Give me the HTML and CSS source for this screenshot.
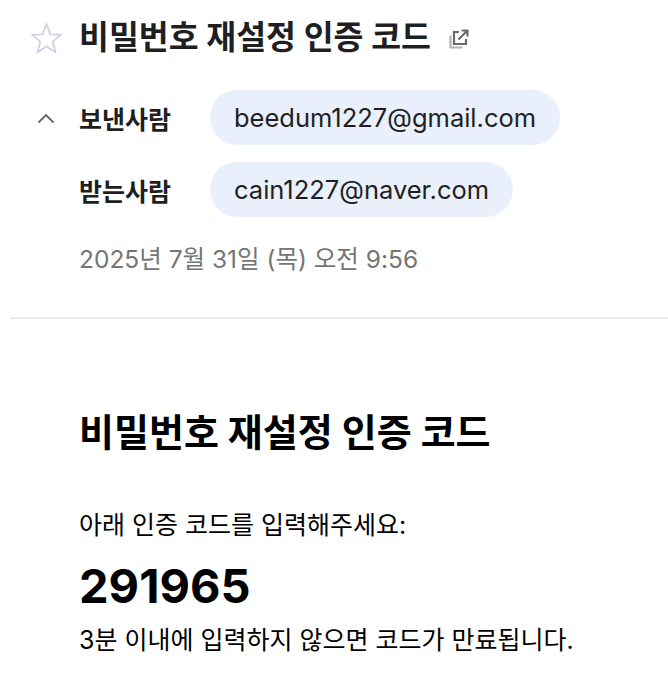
FILE: index.html
```html
<!DOCTYPE html>
<html lang="ko">
<head>
    <meta charset="UTF-8">
    <meta name="viewport" content="width=device-width, initial-scale=1.0">
    <title>비밀번호 재설정 인증 코드</title>
    <link rel="stylesheet" href="styles.css">
</head>
<body>
    <div class="mail">
        <div class="mail-head">
            <div class="subject-row">
                <svg class="star" width="33" height="33" viewBox="0 0 33 33">
                    <path d="M16.5 2 L20.4 12.4 L31 12.7 L22.6 19.6 L25.6 30.5 L16.5 24.2 L7.4 30.5 L10.4 19.6 L2 12.7 L12.6 12.4 Z" fill="none" stroke="#cfd2e4" stroke-width="1.8" stroke-linejoin="round"/>
                </svg>
                <h1 class="subject">비밀번호 재설정 인증 코드</h1>
                <svg class="popout" width="22" height="22" viewBox="0 0 22 22">
                    <path d="M2.5 7.5 V19.5 H14.5" fill="none" stroke="#b4b4b4" stroke-width="2.2"/>
                    <path d="M11 4 H6 V16 H18 V11" fill="none" stroke="#6b6b6b" stroke-width="2.2"/>
                    <path d="M10.5 11.5 L19 3 M13.5 2.5 H19.5 V8.5" fill="none" stroke="#6b6b6b" stroke-width="2.2"/>
                </svg>
            </div>
            <div class="people">
                <div class="person-row">
                    <span class="toggle">
                        <svg width="18" height="12" viewBox="0 0 18 12"><path d="M1.5 10.5 L9 3 L16.5 10.5" fill="none" stroke="#666" stroke-width="1.8"/></svg>
                    </span>
                    <span class="label">보낸사람</span>
                    <span class="pill">beedum1227@gmail.com</span>
                </div>
                <div class="person-row">
                    <span class="toggle"></span>
                    <span class="label">받는사람</span>
                    <span class="pill">cain1227@naver.com</span>
                </div>
            </div>
            <div class="date">2025년 7월 31일 (목) 오전 9:56</div>
        </div>
        <div class="divider"></div>
        <div class="mail-body">
            <h2 class="body-title">비밀번호 재설정 인증 코드</h2>
            <p class="text">아래 인증 코드를 입력해주세요:</p>
            <p class="code">291965</p>
            <p class="text">3분 이내에 입력하지 않으면 코드가 만료됩니다.</p>
        </div>
    </div>
</body>
</html>
```

FILE: styles.css
```css
body {
    margin: 0;
    padding: 0;
    background: #ffffff;
    font-family: Inter, "Noto Sans CJK KR", sans-serif;
    color: #1f1f22;
}
.mail-head {
    padding: 18px 0 0 30px;
}
.subject-row {
    display: flex;
    align-items: center;
    height: 40px;
}
.star {
    margin-right: 16px;
}
.subject {
    margin: 0;
    font-size: 32.5px;
    line-height: 40px;
    font-weight: 700;
    color: #1f1f22;
}
.popout {
    margin-left: 17px;
    margin-top: 2px;
}
.people {
    display: flex;
    flex-direction: column;
    gap: 17px;
    margin-top: 32px;
}
.person-row {
    display: flex;
    align-items: center;
    height: 55px;
}
.toggle {
    width: 49px;
    display: flex;
    padding-left: 7px;
    box-sizing: border-box;
}
.label {
    width: 131px;
    font-size: 25px;
    font-weight: 600;
    color: #1f1f22;
}
.pill {
    background: #e9effb;
    border-radius: 28px;
    height: 55px;
    line-height: 55px;
    padding: 0 24px;
    font-size: 25.5px;
    color: #1f1f22;
}
.date {
    margin: 24px 0 0 49px;
    font-size: 24.5px;
    line-height: 36px;
    color: #757575;
}
.divider {
    height: 2px;
    background: #ececec;
    margin: 40px 0 0 10px;
}
.mail-body {
    padding: 88px 0 0 79px;
    color: #000000;
}
.body-title {
    margin: 0;
    font-size: 38px;
    line-height: 50px;
    font-weight: 700;
}
.text {
    margin: 50px 0 0;
    font-size: 25px;
    line-height: 36px;
}
.code {
    margin: 14px 0 0;
    font-size: 47px;
    line-height: 58px;
    font-weight: 700;
}
.code + .text {
    margin-top: 7px;
}
```
